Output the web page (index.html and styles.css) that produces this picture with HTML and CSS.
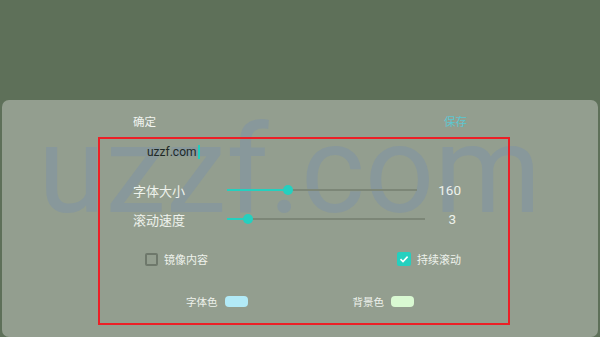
FILE: index.html
```html
<!DOCTYPE html>
<html lang="zh-CN">
  <head>
    <meta charset="UTF-8" />
    <meta name="viewport" content="width=device-width, initial-scale=1.0" />
    <title>滚动字幕设置</title>
    <link rel="stylesheet" href="styles.css">
  </head>
  <body>
    <div class="top"></div>
    <div class="sheet">
      <div class="watermark">uzzf.com</div>
      <div class="actions">
        <a href="" class="ok">确定</a>
        <a href="" class="save">保存</a>
      </div>
      <div class="panel">
        <div class="input-row">
          <span class="input-text">uzzf.com</span><span class="cursor"></span>
        </div>
        <div class="slider-row first">
          <span class="label">字体大小</span>
          <div class="slider">
            <div class="fill" style="width: 61px"></div>
            <div class="thumb"></div>
          </div>
          <span class="value">160</span>
        </div>
        <div class="slider-row second">
          <span class="label">滚动速度</span>
          <div class="slider">
            <div class="fill" style="width: 21px"></div>
            <div class="thumb"></div>
          </div>
          <span class="value">3</span>
        </div>
        <div class="check-row">
          <label class="check"><span class="box"></span>镜像内容</label>
          <label class="check on">
            <span class="box">
              <svg width="10" height="10" viewBox="0 0 10 10"><path d="M1.5 5.2 L4 7.6 L8.6 2.6" fill="none" stroke="#fff" stroke-width="1.6"/></svg>
            </span>持续滚动
          </label>
        </div>
        <div class="color-row">
          <div class="color-item">字体色<span class="chip font"></span></div>
          <div class="color-item">背景色<span class="chip bg"></span></div>
        </div>
      </div>
    </div>
  </body>
</html>
```

FILE: styles.css
```css
* {
  margin: 0;
  padding: 0;
  box-sizing: border-box;
}
body {
  width: 600px;
  height: 337px;
  overflow: hidden;
  background-color: #5e7059;
  font-family: Roboto, "Noto Sans CJK SC", sans-serif;
  color: #eef2ec;
}
a {
  text-decoration: none;
}

.top {
  height: 100px;
}
.sheet {
  position: relative;
  height: 237px;
  margin: 0 2px;
  padding-top: 11px;
  background-color: #939e8f;
  border-radius: 7px 7px 7px 7px;
}
/*뒤에 깔린 워터마크*/
.watermark {
  position: absolute;
  left: 36px;
  top: 1px;
  font-family: Roboto, sans-serif;
  font-size: 122px;
  line-height: 140px;
  color: #88989b;
}

.actions {
  position: relative;
  display: flex;
  justify-content: space-between;
  height: 20px;
  align-items: center;
  padding: 0 131px 0 131px;
  font-size: 11.5px;
}
.actions .ok {
  color: #f1f4f0;
}
.actions .save {
  color: #5ec6cf;
}

.panel {
  position: relative;
  width: 412px;
  margin: 6px 0 0 96px;
  padding: 0 47px 9px 33px;
  border: 2px solid #ec1f26;
}
.input-row {
  display: flex;
  align-items: center;
  height: 26px;
  padding-left: 14px;
}
.input-text {
  font-size: 12px;
  color: #1e2926;
}
.cursor {
  width: 2px;
  height: 14px;
  margin-left: 1px;
  background-color: #22cdbd;
}

.slider-row {
  display: flex;
  align-items: center;
  height: 26px;
}
.slider-row.first {
  margin-top: 12px;
}
.slider-row.second {
  margin-top: 3px;
}
.label {
  width: 94px;
  font-size: 13px;
}
.slider {
  position: relative;
  flex: 1;
  height: 2px;
  background-color: #7c8677;
}
.fill {
  height: 2px;
  background-color: #25d0bf;
}
.thumb {
  position: absolute;
  top: -4px;
  margin-left: -5px;
  width: 10px;
  height: 10px;
  border-radius: 50%;
  background-color: #25d0bf;
}
.first .thumb {
  left: 61px;
}
.second .thumb {
  left: 21px;
}
.value {
  margin-left: 21px;
  font-size: 13.5px;
}
.second .value {
  margin-left: 23px;
  padding-right: 5px;
}

.check-row {
  display: flex;
  justify-content: space-between;
  align-items: center;
  height: 26px;
  margin-top: 14px;
  padding-left: 12px;
}
.check {
  display: flex;
  align-items: center;
  font-size: 11px;
}
.box {
  display: flex;
  align-items: center;
  justify-content: center;
  width: 13px;
  height: 13px;
  margin-right: 6px;
  border: 2px solid #6e786b;
  border-radius: 2px;
}
.check.on .box {
  width: 14px;
  height: 14px;
  border: none;
  background-color: #25d0bf;
}

.color-row {
  display: flex;
  align-items: center;
  height: 26px;
  margin-top: 16px;
  padding-left: 53px;
}
.color-item {
  display: flex;
  align-items: center;
  font-size: 10.5px;
}
.color-item + .color-item {
  margin-left: 105px;
}
.chip {
  width: 23px;
  height: 11px;
  margin-left: 7px;
  border-radius: 4px;
}
.chip.font {
  background-color: #b2eaf7;
}
.chip.bg {
  background-color: #d9f9d2;
}
```
